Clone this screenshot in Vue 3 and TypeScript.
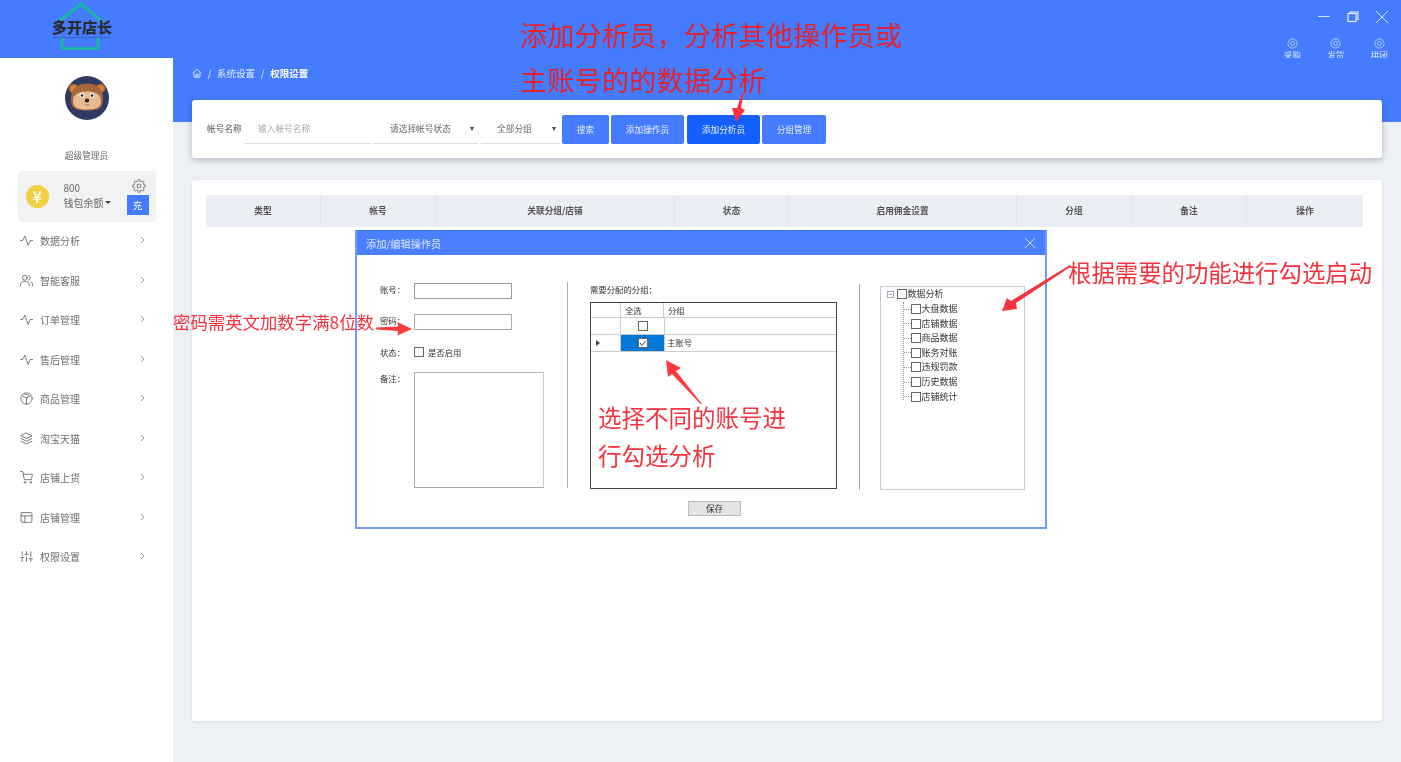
<script setup lang="ts">
const menu: { label: string; icon: string }[] = [
  { label: '数据分析', icon: 'pulse' },
  { label: '智能客服', icon: 'users' },
  { label: '订单管理', icon: 'pulse' },
  { label: '售后管理', icon: 'pulse' },
  { label: '商品管理', icon: 'box' },
  { label: '淘宝天猫', icon: 'layers' },
  { label: '店铺上货', icon: 'cart' },
  { label: '店铺管理', icon: 'layout' },
  { label: '权限设置', icon: 'sliders' },
]
const columns: { label: string; width: number }[] = [
  { label: '类型', width: 115 },
  { label: '帐号', width: 115 },
  { label: '关联分组/店铺', width: 239 },
  { label: '状态', width: 114 },
  { label: '启用佣金设置', width: 228 },
  { label: '分组', width: 115 },
  { label: '备注', width: 115 },
  { label: '操作', width: 116 },
]
const tools = ['采购', '发货', '拼团']
const buttons = ['搜索', '添加操作员', '添加分析员', '分组管理']
const tree = ['大盘数据', '店铺数据', '商品数据', '账务对账', '违规罚款', '历史数据', '店铺统计']
</script>

<template>
  <div class="page">
    <header class="topbar">
      <div class="logo">
        <svg class="logo-mark" width="76" height="52" viewBox="0 0 76 52" fill="none">
          <path d="M13 22 L36 4 L58 22" stroke="#19b5a5" stroke-width="3" />
          <path d="M17 37 V48.5 H53 V37" stroke="#19b5a5" stroke-width="3" />
          <path d="M8 37.5 H65" stroke="#33568f" stroke-width="0.6" />
        </svg>
        <span class="logo-text">多开店长</span>
      </div>
      <div class="top-right">
        <div class="win-controls">
          <svg width="14" height="14" viewBox="0 0 14 14" fill="none" stroke="#d5e1ff" stroke-width="1"><path d="M1 6.5 H13" /></svg>
          <svg width="14" height="14" viewBox="0 0 14 14" fill="none" stroke="#e6edff" stroke-width="1.2"><rect x="2" y="3.5" width="8" height="8" /><path d="M4 3.5 V2 H12 V9.5 H10" /></svg>
          <svg width="14" height="14" viewBox="0 0 14 14" fill="none" stroke="#d5e1ff" stroke-width="1"><path d="M1 1 L13 13 M13 1 L1 13" /></svg>
        </div>
        <div class="tools">
          <div v-for="t in tools" :key="t" class="tool">
            <svg width="11" height="11" viewBox="0 0 12 12" fill="none" stroke="#c9d9ff" stroke-width="0.9">
              <circle cx="6" cy="6" r="5" />
              <circle cx="6" cy="6" r="2.2" />
            </svg>
            <span>{{ t }}</span>
          </div>
        </div>
      </div>
    </header>

    <div class="body">
      <aside class="sidebar">
        <div class="avatar">
          <svg width="44" height="44" viewBox="0 0 44 44">
            <circle cx="22" cy="22" r="22" fill="#2e3a63" />
            <circle cx="8.5" cy="12.5" r="4.8" fill="#a9693a" />
            <circle cx="35.5" cy="12.5" r="4.8" fill="#a9693a" />
            <circle cx="8.5" cy="12.5" r="3" fill="#e0842f" />
            <circle cx="35.5" cy="12.5" r="3" fill="#e0842f" />
            <path d="M6 22 C6 12 13 7.5 22 7.5 C31 7.5 38 12 38 22 C38 31 36 34.5 22 34.5 C8 34.5 6 31 6 22 Z" fill="#a5683c" />
            <path d="M8 25 C8 18 14 15.5 22 15.5 C30 15.5 36 18 36 25 C36 31 32 33.5 22 33.5 C12 33.5 8 31 8 25 Z" fill="#e8bb90" />
            <circle cx="17" cy="19.5" r="2.4" fill="#f3f3f3" />
            <circle cx="27" cy="19.5" r="2.4" fill="#f3f3f3" />
            <circle cx="17" cy="19.5" r="1.3" fill="#222" />
            <circle cx="27" cy="19.5" r="1.3" fill="#222" />
            <ellipse cx="22" cy="24.5" rx="2.2" ry="1.9" fill="#2a1c16" />
            <path d="M20 28.5 Q22 30 24 28.5" stroke="#8a5a38" stroke-width="0.8" fill="none" />
          </svg>
        </div>
        <div class="role">超级管理员</div>
        <div class="wallet">
          <div class="coin">¥</div>
          <div class="wallet-info">
            <div class="amount">800</div>
            <div class="wallet-label">钱包余额<i class="caret"></i></div>
          </div>
          <div class="wallet-side">
            <svg width="14" height="14" viewBox="0 0 24 24" fill="none" stroke="#666" stroke-width="1.6">
              <circle cx="12" cy="12" r="3.4" />
              <path d="M19.4 15a1.7 1.7 0 0 0 .3 1.8l.1.1a2 2 0 1 1-2.9 2.9l-.1-.1a1.7 1.7 0 0 0-2.8 1.2V21a2 2 0 0 1-4 0v-.1a1.7 1.7 0 0 0-2.9-1.2l-.1.1a2 2 0 1 1-2.9-2.9l.1-.1a1.7 1.7 0 0 0-1.2-2.8H3a2 2 0 0 1 0-4h.1a1.7 1.7 0 0 0 1.2-2.9l-.1-.1a2 2 0 1 1 2.9-2.9l.1.1a1.7 1.7 0 0 0 1.8.3h.1a1.7 1.7 0 0 0 1-1.5V3a2 2 0 0 1 4 0v.1a1.7 1.7 0 0 0 2.9 1.2l.1-.1a2 2 0 1 1 2.9 2.9l-.1.1a1.7 1.7 0 0 0-.3 1.8v.1a1.7 1.7 0 0 0 1.5 1H21a2 2 0 0 1 0 4h-.1a1.7 1.7 0 0 0-1.5 1z" />
            </svg>
            <button class="charge">充</button>
          </div>
        </div>
        <nav class="menu">
          <div v-for="m in menu" :key="m.label" class="menu-item">
            <svg class="menu-icon" width="13" height="13" viewBox="0 0 24 24" fill="none" stroke="#666" stroke-width="1.6" stroke-linecap="round" stroke-linejoin="round">
              <path v-if="m.icon === 'pulse'" d="M1 12 H5 L9 4 L15 21 L19 12 H23" />
              <template v-else-if="m.icon === 'users'">
                <circle cx="9" cy="7" r="4.5" />
                <path d="M1 22 V19 C1 15 5 14 9 14 C13 14 17 15 17 19 V22" />
                <path d="M16 3 A4.5 4.5 0 0 1 16 11.5 M20 14.5 C22 15.5 23 17 23 19 V22" />
              </template>
              <template v-else-if="m.icon === 'box'">
                <circle cx="12" cy="12" r="10.5" />
                <path d="M5 7.5 L12 11 L19 7.5 M12 11 V22 M8 3 L16 6" />
              </template>
              <path v-else-if="m.icon === 'layers'" d="M12 2 L22 7 L12 12 L2 7 Z M2 12 L12 17 L22 12 M2 17 L12 22 L22 17" />
              <template v-else-if="m.icon === 'cart'">
                <circle cx="9" cy="21" r="1.5" />
                <circle cx="20" cy="21" r="1.5" />
                <path d="M1 1 H5 L8 16 H21 L23 6 H6" />
              </template>
              <template v-else-if="m.icon === 'layout'">
                <rect x="2" y="3" width="20" height="18" rx="2" />
                <path d="M2 9 H22 M9 9 V21" />
              </template>
              <path v-else d="M4 21 V14 M4 10 V3 M12 21 V12 M12 8 V3 M20 21 V16 M20 12 V3 M1 14 H7 M9 8 H15 M17 16 H23" />
            </svg>
            <span class="menu-label">{{ m.label }}</span>
            <svg class="chev" width="5" height="8" viewBox="0 0 5 8" fill="none" stroke="#999" stroke-width="1"><path d="M1 1 L4 4 L1 7" /></svg>
          </div>
        </nav>
      </aside>

      <main class="main">
        <div class="crumbs">
          <svg width="10" height="10" viewBox="0 0 12 12" fill="none" stroke="#e4ecff" stroke-width="1.1"><path d="M1 6 L6 1.5 L11 6 M2.5 5 V11 H9.5 V5 M5 11 V7.5 H7 V11" /></svg>
          <span class="sep">/</span>
          <span>系统设置</span>
          <span class="sep">/</span>
          <b>权限设置</b>
        </div>

        <section class="card filter">
          <span class="f-label">帐号名称</span>
          <div class="f-input">输入帐号名称</div>
          <div class="f-select s1"><span>请选择帐号状态</span><i class="tri"></i></div>
          <div class="f-select s2"><span>全部分组</span><i class="tri"></i></div>
          <div class="btns">
            <button v-for="(b, i) in buttons" :key="b" class="btn" :class="{ active: i === 2 }">{{ b }}</button>
          </div>
        </section>

        <section class="card table-card">
          <div class="thead">
            <div v-for="c in columns" :key="c.label" class="th" :style="{ width: c.width + 'px' }">{{ c.label }}</div>
          </div>
        </section>
      </main>
    </div>

    <div class="dialog">
      <div class="d-title">
        <span>添加/编辑操作员</span>
        <svg width="12" height="12" viewBox="0 0 12 12" fill="none" stroke="#cfdcff" stroke-width="1"><path d="M1 1 L11 11 M11 1 L1 11" /></svg>
      </div>
      <div class="d-body">
        <div class="d-form">
          <div class="f-row r1"><label>账号：</label><div class="box-input dark"></div></div>
          <div class="f-row r2"><label>密码：</label><div class="box-input"></div></div>
          <div class="f-row r3"><label>状态：</label><i class="check"></i><span class="ck-text">是否启用</span></div>
          <div class="f-row r4"><label>备注：</label><div class="textarea"></div></div>
        </div>
        <div class="vline"></div>
        <div class="d-mid">
          <div class="mid-title">需要分配的分组：</div>
          <div class="grid">
            <div class="g-row head">
              <div class="c0"></div><div class="c1">全选</div><div class="c2">分组</div>
            </div>
            <div class="g-row">
              <div class="c0"></div><div class="c1"><i class="check"></i></div><div class="c2"></div>
            </div>
            <div class="g-row">
              <div class="c0"><i class="pointer"></i></div>
              <div class="c1 selected">
                <i class="check checked">
                  <svg width="8" height="8" viewBox="0 0 8 8" fill="none" stroke="#444" stroke-width="1"><path d="M1 4 L3 6.5 L7 1.5" /></svg>
                </i>
              </div>
              <div class="c2">主账号</div>
            </div>
          </div>
          <button class="save">保存</button>
        </div>
        <div class="vline v2"></div>
        <div class="tree">
          <div class="t-root">
            <i class="expander"></i><i class="check"></i><span>数据分析</span>
          </div>
          <div class="t-children">
            <div v-for="t in tree" :key="t" class="t-node">
              <i class="dash"></i><i class="check"></i><span>{{ t }}</span>
            </div>
          </div>
        </div>
      </div>
    </div>

    <div class="note n1">添加分析员，分析其他操作员或</div>
    <div class="note n2">主账号的的数据分析</div>
    <div class="note n3">密码需英文加数字满8位数</div>
    <div class="note n4">根据需要的功能进行勾选启动</div>
    <div class="note n5">选择不同的账号进</div>
    <div class="note n6">行勾选分析</div>

    <svg class="arrows" width="1401" height="762" viewBox="0 0 1401 762">
      <polygon points="742,93 743.5,93.5 741,108 745,110 736,122 732,108 737,108" fill="#f5333f" />
      <polygon points="376,327.5 398,326.5 397.5,322 412,329 397.5,335.5 398,331 376,329.5" fill="#fb3c3c" />
      <polygon points="666,360 681,368 676,371 702,404 701,404.5 672,374 668,377" fill="#fb3c3c" />
      <polygon points="1070,265 1071,266.5 1016,303 1017,309 1002,311 1007,298 1011,301" fill="#f5333f" />
    </svg>
  </div>
</template>

<style scoped>
.page {
  position: relative;
  width: 1401px;
  height: 762px;
  overflow: hidden;
  display: flex;
  flex-direction: column;
  background: #edf0f5;
  font-family: "Noto Sans CJK SC", "Noto Sans", sans-serif;
  color: #555;
  filter: blur(0.3px);
}
i { display: block; font-style: normal; }

.topbar {
  height: 58px;
  flex: none;
  background: #457bff;
  display: flex;
  justify-content: space-between;
}
.logo { position: relative; width: 173px; }
.logo-mark { position: absolute; left: 45px; top: 0; }
.logo-text {
  position: absolute;
  left: 52px;
  top: 17px;
  font-size: 15px;
  line-height: 20px;
  font-weight: 900;
  color: #2b2b33;
}
.top-right {
  width: 130px;
  display: flex;
  flex-direction: column;
  align-items: flex-end;
  padding-right: 12px;
}
.win-controls { display: flex; gap: 15px; margin-top: 10px; }
.tools { display: flex; gap: 25px; margin-top: 14px; margin-right: 0.5px; }
.tool {
  display: flex;
  flex-direction: column;
  align-items: center;
  font-size: 8.6px;
  line-height: 12px;
  color: #dbe6ff;
  width: 18.5px;
}

.body { flex: 1; display: flex; min-height: 0; }
.sidebar {
  width: 173px;
  flex: none;
  background: #fff;
  border-top-right-radius: 4px;
  display: flex;
  flex-direction: column;
  align-items: center;
}
.avatar { margin-top: 18px; height: 44px; }
.role { margin-top: 29px; font-size: 8.7px; line-height: 14px; color: #666; }
.wallet {
  margin-top: 8px;
  width: 138px;
  height: 51px;
  background: #f2f2f2;
  border-radius: 4px;
  display: flex;
  padding-left: 8px;
  box-sizing: border-box;
}
.coin {
  width: 23px;
  height: 23px;
  margin-top: 14px;
  border-radius: 50%;
  background: #f0d045;
  color: #fff;
  font-size: 16px;
  line-height: 23px;
  text-align: center;
  font-weight: 500;
}
.wallet-info { margin-left: 15px; padding-top: 9px; flex: 1; font-size: 10px; line-height: 15px; color: #6a6a6a; }
.wallet-label { display: flex; align-items: center; }
.caret { border: 3px solid transparent; border-top-color: #444; border-bottom-width: 0; margin-left: 1px; }
.wallet-side { width: 29px; display: flex; flex-direction: column; align-items: center; padding-top: 8px; }
.charge {
  margin-top: 2px;
  margin-right: 7px;
  width: 22px;
  height: 20px;
  padding: 0;
  border: 0;
  background: #457bff;
  color: #fff;
  font: 9.5px/20px "Noto Sans CJK SC", sans-serif;
}
.wallet-side svg { margin-right: 5px; }
.menu { width: 100%; margin-top: -1px; }
.menu-item {
  height: 39.5px;
  display: flex;
  align-items: center;
  padding-left: 20px;
  box-sizing: border-box;
  font-size: 10px;
  color: #6e6e6e;
}
.menu-icon { flex: none; }
.menu-label { margin-left: 7px; width: 99px; }
.chev { flex: none; margin-left: 1px; margin-top: -1px; }

.main {
  flex: 1;
  min-width: 0;
  padding: 0 19px;
  background: linear-gradient(#457bff 64px, #edf0f5 64px);
}
.crumbs {
  height: 42px;
  box-sizing: border-box;
  padding-top: 8px;
  display: flex;
  align-items: flex-start;
  color: #e1eaff;
  font-size: 9.5px;
  line-height: 14px;
}
.crumbs svg { margin-top: 2px; }
.crumbs b { color: #fff; font-weight: 700; }
.sep { margin: 0 5.7px; }
.card { background: #fff; border-radius: 3px; }
.filter {
  height: 58px;
  display: flex;
  align-items: flex-start;
  box-shadow: 0 2px 6px rgba(60, 70, 90, 0.35);
  padding-left: 15px;
  font-size: 8.7px;
}
.f-label { margin-top: 22px; line-height: 14px; width: 37px; flex: none; white-space: nowrap; color: #555; }
.f-input {
  width: 127px;
  height: 29px;
  margin-top: 15px;
  box-sizing: border-box;
  border-bottom: 1px solid #ddd;
  padding: 7px 0 0 14px;
  line-height: 14px;
  color: #aaa;
}
.f-select {
  height: 29px;
  margin-top: 15px;
  box-sizing: border-box;
  border-bottom: 1px solid #ddd;
  display: flex;
  justify-content: space-between;
  padding: 7px 4px 0 17px;
  line-height: 14px;
  color: #666;
}
.s1 { width: 105px; margin-left: 2px; }
.s2 { width: 79px; margin-left: 3px; padding-left: 16px; }
.tri {
  border: 2.5px solid transparent;
  border-top: 4px solid #444;
  border-bottom-width: 0;
  margin-top: 5px;
}
.btns { display: flex; margin-left: 2px; margin-top: 15px; }
.btn {
  height: 29px;
  padding: 0;
  border: 0;
  border-radius: 2px;
  background: #457bff;
  color: #e8efff;
  font: 8.7px/29px "Noto Sans CJK SC", sans-serif;
  margin-right: 2px;
  width: 47px;
}
.btn:nth-child(2) { width: 73px; margin-right: 3px; }
.btn:nth-child(3) { width: 73px; }
.btn:nth-child(4) { width: 64px; }
.btn.active { background: #1460ff; }

.table-card {
  margin-top: 22px;
  height: 541px;
  padding: 15px 14px 0;
  box-sizing: border-box;
  box-shadow: 0 1px 3px rgba(60, 70, 90, 0.12);
}
.thead { display: flex; width: 1157px; height: 32px; background: #ebeef5; }
.th {
  box-sizing: border-box;
  border-right: 1px solid #e0e3ea;
  text-align: center;
  font-size: 8.7px;
  font-weight: 700;
  line-height: 32px;
  color: #555;
}
.th:last-child { border-right: 0; }

/* dialog floats over the page */
.dialog {
  position: absolute;
  left: 355px;
  top: 230px;
  width: 692px;
  height: 299px;
  box-sizing: border-box;
  border: 2px solid #6f9bff;
  border-top: 1px solid #457bff;
  background: #fff;
  color: #333;
  font-size: 8.4px;
}
.d-title {
  height: 24px;
  background: #4a80ff;
  color: #dfe8ff;
  font-size: 10.2px;
  display: flex;
  align-items: center;
  justify-content: space-between;
  padding: 0 9px 0 9px;
}
.d-body { display: flex; position: relative; height: 272px; }
.d-form { width: 210px; padding-left: 23px; box-sizing: border-box; }
.f-row { display: flex; align-items: flex-start; line-height: 14px; }
.f-row label { width: 34px; flex: none; margin-top: -1px; }
.r1 { margin-top: 28px; }
.r2 { margin-top: 15px; }
.r3 { margin-top: 15px; align-items: center; }
.r3 label { margin-top: 0; }
.r4 { margin-top: 13px; }
.box-input { width: 98px; height: 16px; box-sizing: border-box; border: 1px solid #aaa; }
.box-input.dark { border-color: #999; }
.textarea { width: 130px; height: 116px; box-sizing: border-box; border: 1px solid #aaa; border-top-color: #bbb; border-right-color: #ccc; }
.check {
  width: 10px;
  height: 10px;
  box-sizing: border-box;
  border: 1px solid #666;
  background: #fff;
  flex: none;
  display: flex;
  align-items: center;
  justify-content: center;
}
.ck-text { margin-left: 4px; }
.vline { width: 1px; height: 206px; margin-top: 27px; background: #aaa; flex: none; }
.d-mid { width: 291px; padding-left: 22px; box-sizing: border-box; display: flex; flex-direction: column; }
.mid-title { margin-top: 27px; line-height: 14px; }
.grid {
  margin-top: 6px;
  width: 247px;
  height: 187px;
  box-sizing: border-box;
  border: 1px solid #444;
}
.g-row { display: flex; height: 17px; box-sizing: border-box; border-bottom: 1px solid #ccc; line-height: 14px; }
.g-row:first-child { height: 15px; }
.c0 { width: 30px; flex: none; border-right: 1px solid #ccc; display: flex; align-items: center; padding-left: 5px; box-sizing: border-box; }
.c1 { width: 43px; flex: none; border-right: 1px solid #ccc; display: flex; align-items: center; justify-content: center; }
.head .c1 { justify-content: flex-start; padding-left: 4px; box-sizing: border-box; }
.c2 { flex: 1; padding-left: 2px; }
.head .c2 { padding-left: 4px; }
.selected { background: #0078d7; }
.pointer { border: 3px solid transparent; border-left: 4px solid #444; border-right-width: 0; }
.save {
  align-self: flex-start;
  margin: 12px 0 0 98px;
  width: 53px;
  height: 15px;
  padding: 0;
  border: 1px solid #bbb;
  background: #e4e4e4;
  color: #333;
  font: 8.6px/13px "Noto Sans CJK SC", sans-serif;
}
.v2 { margin-top: 29px; }
.tree {
  margin: 31px 0 0 20px;
  width: 145px;
  height: 204px;
  box-sizing: border-box;
  border: 1.5px solid #c6c9cf;
  padding: 0 0 0 5.5px;
  line-height: 12px;
  font-size: 9px;
}
.t-root { display: flex; align-items: center; height: 12px; margin-top: 1px; }
.expander {
  position: relative;
  width: 7px;
  height: 7px;
  box-sizing: border-box;
  border: 1px solid #aab;
  background: linear-gradient(#aab, #aab) center / 3px 1px no-repeat;
  margin-right: 3px;
}
.t-root .check { margin-right: 1px; }
.t-children {
  margin-left: 16px;
  margin-top: 2px;
  border-left: 1px dotted #999;
  height: 98px;
}
.t-node { display: flex; align-items: center; height: 14.55px; }
.dash { width: 7px; border-top: 1px dotted #999; flex: none; }
.t-node .check { margin-right: 1px; }

/* red review notes drawn on top of the screenshot */
.note { position: absolute; white-space: nowrap; color: #e3222e; line-height: 1.2; }
.n1 { left: 520px; top: 19px; font-size: 27px; letter-spacing: 0.3px; }
.n2 { left: 520px; top: 64px; font-size: 27px; letter-spacing: 0.3px; }
.n3 { left: 173px; top: 312px; font-size: 17.4px; color: #f5333f; }
.n4 { left: 1068px; top: 258px; font-size: 23.4px; color: #f5333f; }
.n5 { left: 598px; top: 403px; font-size: 23.5px; color: #f5333f; }
.n6 { left: 598px; top: 441px; font-size: 23.5px; color: #f5333f; }
.arrows { position: absolute; left: 0; top: 0; pointer-events: none; }
</style>

<style>
html, body { margin: 0; padding: 0; }
</style>
